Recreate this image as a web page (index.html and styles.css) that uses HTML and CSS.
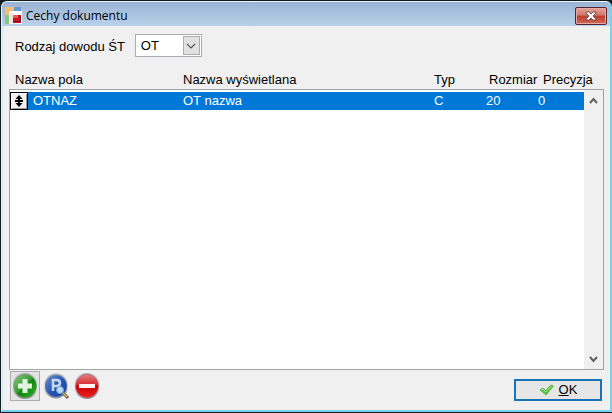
FILE: index.html
```html
<!DOCTYPE html>
<html lang="pl">
<head>
<meta charset="utf-8">
<title>Cechy dokumentu</title>
<link rel="stylesheet" href="styles.css">
</head>
<body>
<main class="window">
  <header class="titlebar">
    <svg class="app-icon" width="17" height="17" viewBox="0 0 17 17" aria-hidden="true">
      <path fill="#f5bd72" d="M0 0h9v8H0z"/><path fill="#629bd2" d="M9 0h7v4H9z"/>
      <path fill="#86c77c" d="M0 8h5v9H0z"/>
      <path fill="#fff" d="M4 6q0-2 2-2h11v13H4z"/>
      <path fill="#d4c9c5" d="M5 6h3v10H5z" opacity=".5"/>
      <path fill="#c91520" d="M8 8h8v8H8z"/><path fill="#ed5a56" d="M8 8h5v3H8z"/>
      <path fill="#8d0b18" d="M9 15h7V9h-1v5H9z"/>
    </svg>
    <h1>Cechy dokumentu</h1>
    <button class="close" type="button" aria-label="Zamknij">
      <svg width="12" height="10" viewBox="0 0 12 10"><path d="M1 1h3l2 2 2-2h3v1L8 5l3 3v1H8L6 7 4 9H1V8l3-3-3-3z" fill="#fff" stroke="#54383d" stroke-width=".8"/></svg>
    </button>
  </header>
  <div class="content">
    <div class="filter">
      <label for="kind">Rodzaj dowodu ŚT</label>
      <div class="combo">
        <select id="kind"><option>OT</option></select>
        <span class="arrow"><svg width="10" height="6" viewBox="0 0 10 6"><path d="M1 1l4 4 4-4" fill="none" stroke="#555" stroke-width="1.2"/></svg></span>
      </div>
    </div>
    <div class="list">
      <table>
        <thead><tr><th>Nazwa pola</th><th>Nazwa wyświetlana</th><th>Typ</th><th class="size">Rozmiar</th><th class="precision">Precyzja</th></tr></thead>
        <tbody><tr>
          <td class="name"><button class="handle" type="button" aria-label="Przesuń"><svg width="8" height="12" viewBox="0 0 8 12"><path d="M4 0l3.500 4H5v1h3v2H5v1h2.500L4 12 .5 8H3V7H0V5h3V4H.5z" fill="#000"/></svg></button>OTNAZ</td>
          <td>OT nazwa</td><td>C</td><td>20</td><td>0</td>
        </tr></tbody>
      </table>
      <div class="scroll">
        <button type="button" aria-label="W górę"><svg width="9" height="7" viewBox="0 0 9 7"><path d="M1 6l3.500-4L8 6" fill="none" stroke="#606060" stroke-width="2"/></svg></button>
        <button type="button" aria-label="W dół"><svg width="9" height="7" viewBox="0 0 9 7"><path d="M1 1l3.500 4L8 1" fill="none" stroke="#606060" stroke-width="2"/></svg></button>
      </div>
    </div>
    <footer>
      <div class="tools">
        <button class="tool focused" type="button" aria-label="Dodaj">
          <svg width="28" height="28" viewBox="0 0 28 28">
            <defs>
              <linearGradient id="rim" x2="0" y2="1"><stop stop-color="#a9a9a9"/><stop offset=".5" stop-color="#eee"/><stop offset="1" stop-color="#8f8f8f"/></linearGradient>
              <linearGradient id="green" x2="1" y2="1"><stop stop-color="#8ccb85"/><stop offset=".48" stop-color="#329b32"/><stop offset=".52" stop-color="#148514"/><stop offset="1" stop-color="#27b21e"/></linearGradient>
            </defs>
            <circle cx="14" cy="14" r="13" fill="url(#rim)"/><circle cx="14" cy="14" r="11.500" fill="url(#green)" stroke="#5b8f5d" stroke-width=".6"/>
            <path d="M11.500 7h5v4.500H21v5h-4.500V21h-5v-4.500H7v-5h4.500z" fill="#e2f3df"/>
          </svg>
        </button>
        <button class="tool" type="button" aria-label="Podgląd">
          <svg width="28" height="28" viewBox="0 0 28 28">
            <defs><linearGradient id="blue" x2="1" y2="1"><stop stop-color="#7392ce"/><stop offset=".5" stop-color="#2856b3"/><stop offset="1" stop-color="#1740a0"/></linearGradient></defs>
            <circle cx="14" cy="14" r="12.500" fill="url(#rim)"/><circle cx="14" cy="14" r="11" fill="url(#blue)" stroke="#6e86b3" stroke-width=".6"/>
            <path d="M11 19V8h3.500q3.500 0 3.500 3t-3.500 3H11" fill="none" stroke="#c8d8f5" stroke-width="2.500"/>
            <path d="M21 21l5 5" stroke="#6c5a35" stroke-width="3"/><path d="M21 21l4 4" stroke="#d1b878" stroke-width="1.500"/>
            <circle cx="18" cy="18" r="3.500" fill="#b9dcf6" stroke="#6fa3df"/>
          </svg>
        </button>
        <button class="tool" type="button" aria-label="Usuń">
          <svg width="28" height="28" viewBox="0 0 28 28">
            <defs><linearGradient id="red" x2="0" y2="1"><stop stop-color="#e67b7e"/><stop offset=".45" stop-color="#d92b31"/><stop offset=".5" stop-color="#c80008"/><stop offset="1" stop-color="#ee2020"/></linearGradient></defs>
            <circle cx="14" cy="14" r="13" fill="url(#rim)"/><circle cx="14" cy="14" r="11.500" fill="url(#red)" stroke="#b0595d" stroke-width=".6"/>
            <path d="M6 12h16v4H6z" fill="#fff3f1"/>
          </svg>
        </button>
      </div>
      <button class="ok" type="button">
        <svg width="15" height="12" viewBox="0 0 15 12"><path d="M1 6l3-2 2.500 2.500L12 1l2.500 1L7 11z" fill="#59c545" stroke="#55a94a" stroke-width=".8"/><path d="M2.500 6L4 5l2.500 3L12.500 2" fill="none" stroke="#a4e691"/></svg>
        <span><u>O</u>K</span>
      </button>
    </footer>
  </div>
</main>
</body>
</html>
```
FILE: styles.css
```css
* { box-sizing: border-box; }
body {
  margin: 0;
  height: 100vh;
  padding: 1px 0 1px 1px;
  background: #111c20;
  color: #000;
  font: 13px/18px "Liberation Sans", Arial, sans-serif;
}
button { padding: 0; border: 0; background: none; font: inherit; color: inherit; }
svg { display: block; flex: none; }
.window {
  height: 100%;
  display: flex;
  flex-direction: column;
  background: #f0f0f0;
  border: 1px solid #e9f4fb;
  border-right: 2px solid #75d3eb;
  border-bottom: 2px solid #75d3eb;
  border-radius: 6px 6px 0 0;
  overflow: hidden;
}
.titlebar {
  height: 24px;
  flex: none;
  display: flex;
  align-items: center;
  gap: 4px;
  padding: 3px 3px 0;
  background: linear-gradient(#9bb4d3, #b9d1ea);
}
.titlebar h1 {
  flex: 1;
  margin: 0;
  font: 12px/18px "Open Sans", sans-serif;
}
.close {
  width: 32px;
  height: 18px;
  display: grid;
  place-items: center;
  border: 1px solid #53252c;
  border-radius: 2px;
  background: linear-gradient(#e5a39b, #d2776d 45%, #bd3b2e 50%, #d06b58);
  box-shadow: inset 0 0 0 1px #e9aaa2;
}
.content {
  flex: 1;
  min-height: 0;
  display: flex;
  flex-direction: column;
  padding: 8px 6px 0;
  border-left: 1px solid #d5e3f2;
}
.filter {
  display: flex;
  align-items: center;
  gap: 10px;
  padding-left: 6px;
}
.filter label { padding-top: 2px; }
.combo { display: grid; width: 67px; height: 23px; }
.combo select, .combo .arrow { grid-area: 1 / 1; }
.combo select {
  appearance: none;
  width: 100%;
  padding: 1px 5px 0;
  border: 1px solid #abadb3;
  border-radius: 0;
  background: #fff;
  color: #000;
  font: inherit;
}
.combo .arrow {
  justify-self: end;
  width: 17px;
  margin: 2px 2px 2px 0;
  display: grid;
  place-items: center;
  border: 1px solid #adadad;
  background: #e1e1e1;
  pointer-events: none;
}
.list {
  flex: 1;
  min-height: 0;
  margin-top: 12px;
  display: grid;
  grid-template-columns: 1fr 20px;
}
table, thead, tbody { display: flex; flex-direction: column; }
tbody {
  flex: 1;
  padding-top: 2px;
  border: 1px solid #a0a4a8;
  border-right: 0;
  background: #fff;
}
tr {
  display: grid;
  grid-template-columns: 168px 1fr 52px 52px 46px;
  align-items: center;
}
thead tr { height: 20px; padding: 2px 0 0 6px; }
th { padding: 0; font-weight: 400; text-align: left; white-space: nowrap; }
th.size { padding-left: 3px; }
th.precision { padding-left: 5px; }
tbody tr { height: 18px; padding-left: 5px; background: #0078d7; color: #fff; }
td { padding: 0; }
td.name { display: flex; align-items: center; gap: 5px; margin-left: -5px; }
.handle {
  width: 18px;
  height: 18px;
  display: grid;
  place-items: center;
  border: 1px solid #000;
  background: #f0f0f0;
  box-shadow: inset 1px 1px #fff, inset -1px -1px #999;
}
.scroll {
  margin-top: 20px;
  display: flex;
  flex-direction: column;
  justify-content: space-between;
  border: 1px solid #a0a4a8;
  border-left: 0;
  background: #f0f0f0;
}
.scroll button { height: 20px; display: grid; place-items: center; }
footer {
  flex: none;
  display: flex;
  justify-content: space-between;
  padding: 1px 2px 9px 1px;
}
.tools { display: flex; gap: 1px; }
.tool { width: 30px; height: 30px; display: grid; place-items: center; border: 1px solid transparent; }
.tool.focused { border-color: #adadad; background: #e3e3e3; }
.ok {
  width: 88px;
  height: 22px;
  margin-top: 8px;
  display: flex;
  align-items: center;
  justify-content: center;
  gap: 5px;
  border: 2px solid #1874b7;
  background: #e6e6e6;
}
```
